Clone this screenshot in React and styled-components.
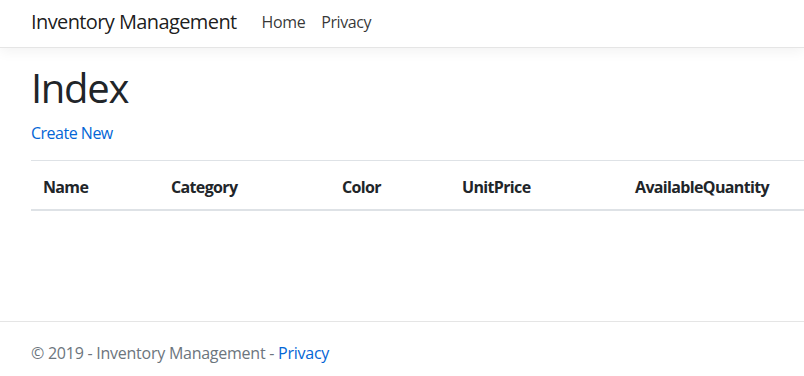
import React from 'react';
import styled, { createGlobalStyle } from 'styled-components';

const GlobalStyle = createGlobalStyle`
  html, body {
    margin: 0;
    padding: 0;
    background: #fff;
  }
  body {
    font-family: "Open Sans", "Noto Sans", sans-serif;
    font-size: 16px;
    line-height: 1.5;
    color: #212529;
    overflow: hidden;
  }
  * {
    box-sizing: border-box;
  }
`;

const Page = styled.div`
  width: 804px;
  height: 376px;
  display: flex;
  flex-direction: column;
  overflow: hidden;
`;

const Navbar = styled.header`
  height: 48px;
  display: flex;
  align-items: center;
  padding: 0 31px 4px;
  border-bottom: 1px solid #e5e5e5;
  box-shadow: 0 4px 12px rgba(0, 0, 0, 0.05);
  background: #fff;
`;

const Brand = styled.a`
  font-size: 20px;
  color: rgba(0, 0, 0, 0.9);
  text-decoration: none;
  margin-right: 17px;
  letter-spacing: -0.6px;
`;

const NavLink = styled.a`
  font-size: 16px;
  color: rgba(0, 0, 0, 0.8);
  text-decoration: none;
  padding: 0 8px;
  letter-spacing: -0.4px;
`;

const Main = styled.main`
  flex: 1;
  padding: 16px 0 0 31px;
`;

const Title = styled.h1`
  margin: 0 0 9px;
  font-size: 40px;
  font-weight: 400;
  line-height: 1.2;
  letter-spacing: -1.3px;
`;

const Link = styled.a`
  color: #0366d6;
  text-decoration: none;
  letter-spacing: -0.5px;
`;

const Table = styled.table`
  margin-top: 15px;
  width: 820px;
  border-collapse: collapse;
`;

const HeadCell = styled.th`
  width: ${(p) => p.w}px;
  padding: 14px 12px 10px;
  text-align: left;
  font-weight: 700;
  font-size: 16px;
  border-top: 1px solid #dee2e6;
  border-bottom: 2px solid #dee2e6;
  letter-spacing: -0.65px;
`;

const Footer = styled.footer`
  height: 55px;
  border-top: 1px solid #e5e5e5;
  padding: 8px 0 0 31px;
  display: flex;
  align-items: center;
  color: #6c757d;
  letter-spacing: -0.25px;
`;

const FooterLink = styled(Link)`
  letter-spacing: -0.25px;
`;

const columns = [
  { label: 'Name', w: 128 },
  { label: 'Category', w: 171 },
  { label: 'Color', w: 120 },
  { label: 'UnitPrice', w: 173 },
  { label: 'AvailableQuantity', w: 228 },
];

export default function App() {
  return (
    <Page>
      <GlobalStyle />
      <Navbar>
        <Brand href="#">Inventory Management</Brand>
        <NavLink href="#">Home</NavLink>
        <NavLink href="#">Privacy</NavLink>
      </Navbar>
      <Main>
        <Title>Index</Title>
        <Link href="#">Create New</Link>
        <Table>
          <thead>
            <tr>
              {columns.map((c) => (
                <HeadCell key={c.label} w={c.w}>
                  {c.label}
                </HeadCell>
              ))}
            </tr>
          </thead>
        </Table>
      </Main>
      <Footer>
        © 2019 - Inventory Management -&nbsp;<FooterLink href="#">Privacy</FooterLink>
      </Footer>
    </Page>
  );
}
